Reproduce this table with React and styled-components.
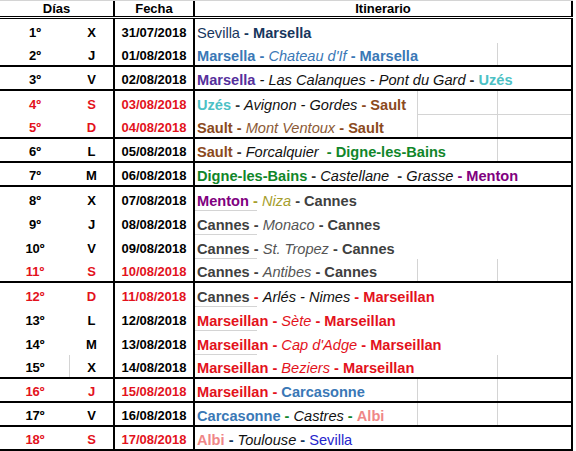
import styled, {createGlobalStyle} from "styled-components";

const GlobalStyle = createGlobalStyle`
  html, body {
    margin: 0;
    padding: 0;
    background: #ffffff;
    overflow: hidden;
  }
  body {
    font-family: "Liberation Sans", Arial, sans-serif;
  }
`

const GRID = "#d4d4d4";

const RED = "#e3121c";
const NAVY = "#17365d";
const STEEL = "#3a78b6";
const PURPLE = "#55309c";
const TURQ = "#4cc1c5";
const BROWN = "#8b4a1d";
const GREEN = "#11862a";
const MAGENTA = "#800080";
const OLIVE = "#a69e2c";
const GRAY = "#404040";
const PINK = "#ef8787";
const BLUE = "#2626cc";
const INK = "#111111";

const Sheet = styled.div`
  width: 573px;
  background: #fff;
`

const HeaderRow = styled.div`
  display: grid;
  grid-template-columns: 115px 80px 378px;
  height: 19px;
  box-sizing: border-box;
  border-top: 1px solid ${GRID};
  border-bottom: 3px double #000;
`

const HeadCell = styled.div`
  display: flex;
  align-items: flex-end;
  justify-content: center;
  box-sizing: border-box;
  border-right: 2px solid #000;
  font-size: 13px;
  font-weight: bold;
  line-height: 14px;
  color: #000;
`

const Row = styled.div`
  display: grid;
  grid-template-columns: 70px 45px 80px 378px;
  height: 24px;
  box-sizing: border-box;
  border-bottom: ${p => (p.$end ? "2px solid #000" : "none")};
`

const Cell = styled.div`
  display: flex;
  align-items: center;
  justify-content: center;
  box-sizing: border-box;
  padding-top: 3px;
  font-size: 13px;
  font-weight: bold;
  line-height: 16px;
  color: ${p => (p.$red ? RED : "#000")};
  border-right: ${p => (p.$ruled ? "2px solid #000" : "none")};
  background: ${p => (p.$gridRight ? `linear-gradient(${GRID}, ${GRID}) no-repeat right 0 top 0 / 1px 100%` : "none")};
`

const ItinCell = styled.div`
  display: flex;
  align-items: center;
  box-sizing: border-box;
  padding: 3px 0 0 2px;
  border-right: 2px solid #000;
  font-size: 14.6px;
  line-height: 16px;
  white-space: pre;
  overflow: hidden;
  background: ${p => p.$bg || "none"};
`

const Seg = styled.span`
  font-weight: ${p => (p.$b ? "bold" : "normal")};
  font-style: ${p => (p.$i ? "italic" : "normal")};
  color: ${p => p.$c};
`

// build the faint excel gridlines that show where cells are empty
const gridLines = ({v = [], h}) => {
  const parts = v.map(x => `linear-gradient(${GRID}, ${GRID}) no-repeat ${x}px 0 / 1px 100%`);
  if (h) parts.push(`linear-gradient(${GRID}, ${GRID}) no-repeat ${h.x}px 100% / ${h.w}px 1px`);
  return parts.length ? parts.join(", ") : null;
}

const b = (t, c) => ({t, c, b: true});
const i = (t, c) => ({t, c, i: true});
const r = (t, c) => ({t, c});

const rows = [
  {n: "1º", d: "X", date: "31/07/2018", it: [r("Sevilla", NAVY), b(" - Marsella", NAVY)]},
  {n: "2º", d: "J", date: "01/08/2018", end: true, grid: {v: [302]},
    it: [b("Marsella - ", STEEL), i("Chateau d'If", STEEL), b(" - Marsella", STEEL)]},
  {n: "3º", d: "V", date: "02/08/2018", end: true,
    it: [b("Marsella", PURPLE), i(" - Las Calanques - Pont du Gard", INK), b(" - ", "#333"), b("Uzés", TURQ)]},
  {n: "4º", d: "S", date: "03/08/2018", red: true, grid: {v: [222, 302], h: {x: 222, w: 154}},
    it: [b("Uzés", TURQ), b(" - ", "#333"), i("Avignon - Gordes", INK), b(" - Sault", BROWN)]},
  {n: "5º", d: "D", date: "04/08/2018", red: true, end: true, grid: {v: [222, 302]},
    it: [b("Sault - ", BROWN), i("Mont Ventoux", "#8c5a36"), b(" - Sault", BROWN)]},
  {n: "6º", d: "L", date: "05/08/2018", end: true, grid: {v: [302]},
    it: [b("Sault", BROWN), b(" - ", "#333"), i("Forcalquier ", INK), b(" - Digne-les-Bains", GREEN)]},
  {n: "7º", d: "M", date: "06/08/2018", end: true,
    it: [b("Digne-les-Bains", GREEN), b(" - ", "#333"), i("Castellane ", INK), b(" - ", "#333"), i("Grasse", INK), b(" - Menton", MAGENTA)]},
  {n: "8º", d: "X", date: "07/08/2018", grid: {h: {x: 0, w: 62}},
    it: [b("Menton", MAGENTA), b(" - ", OLIVE), i("Niza", OLIVE), b(" - Cannes", GRAY)]},
  {n: "9º", d: "J", date: "08/08/2018", grid: {h: {x: 0, w: 62}},
    it: [b("Cannes - ", GRAY), i("Monaco", "#555"), b(" - Cannes", GRAY)]},
  {n: "10º", d: "V", date: "09/08/2018", grid: {h: {x: 0, w: 62}},
    it: [b("Cannes - ", GRAY), i("St. Tropez", "#555"), b(" - Cannes", GRAY)]},
  {n: "11º", d: "S", date: "10/08/2018", red: true, end: true, grid: {v: [222, 302]},
    it: [b("Cannes - ", GRAY), i("Antibes", "#555"), b(" - Cannes", GRAY)]},
  {n: "12º", d: "D", date: "11/08/2018", red: true, grid: {h: {x: 0, w: 62}},
    it: [b("Cannes", GRAY), b(" - ", RED), i("Arlés - Nimes", INK), b(" - Marseillan", RED)]},
  {n: "13º", d: "L", date: "12/08/2018", grid: {h: {x: 0, w: 62}},
    it: [b("Marseillan - ", RED), i("Sète", RED), b(" - Marseillan", RED)]},
  {n: "14º", d: "M", date: "13/08/2018", grid: {h: {x: 0, w: 62}},
    it: [b("Marseillan - ", RED), i("Cap d'Adge", RED), b(" - Marseillan", RED)]},
  {n: "15º", d: "X", date: "14/08/2018", end: true, gridA: true, grid: {v: [302]},
    it: [b("Marseillan - ", RED), i("Beziers", RED), b(" - Marseillan", RED)]},
  {n: "16º", d: "J", date: "15/08/2018", red: true, end: true, grid: {v: [222, 302]},
    it: [b("Marseillan - ", RED), b("Carcasonne", STEEL)]},
  {n: "17º", d: "V", date: "16/08/2018", end: true, grid: {v: [222, 302]},
    it: [b("Carcasonne", STEEL), b(" - ", GREEN), i("Castres", INK), b(" - ", GREEN), b("Albi", PINK)]},
  {n: "18º", d: "S", date: "17/08/2018", red: true, end: true,
    it: [b("Albi", PINK), b(" - ", NAVY), i("Toulouse", INK), b(" - ", NAVY), r("Sevilla", BLUE)]},
];

const App = () => {
  return (
    <>
      <GlobalStyle/>
      <Sheet>
        <HeaderRow>
          <HeadCell>Días</HeadCell>
          <HeadCell>Fecha</HeadCell>
          <HeadCell>Itinerario</HeadCell>
        </HeaderRow>
        {rows.map(row => (
          <Row key={row.n} $end={row.end}>
            <Cell $red={row.red} $gridRight={row.gridA}>{row.n}</Cell>
            <Cell $red={row.red} $ruled>{row.d}</Cell>
            <Cell $red={row.red} $ruled>{row.date}</Cell>
            <ItinCell $bg={row.grid ? gridLines(row.grid) : null}>
              {row.it.map((s, k) => (
                <Seg key={k} $b={s.b} $i={s.i} $c={s.c}>{s.t}</Seg>
              ))}
            </ItinCell>
          </Row>
        ))}
      </Sheet>
    </>
  )
}

export default App;
